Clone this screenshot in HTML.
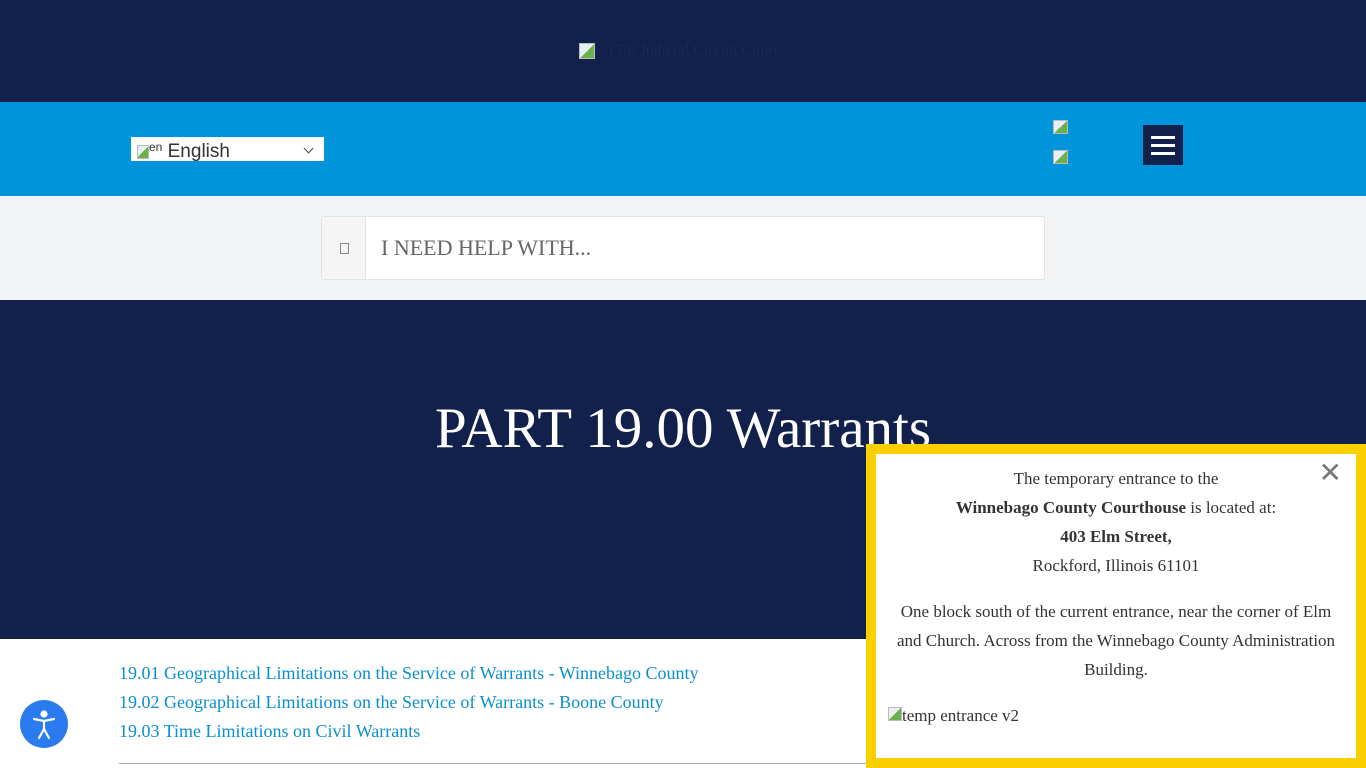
<!DOCTYPE html>
<html><head><meta charset="utf-8"><style>
*{margin:0;padding:0;box-sizing:border-box}
body{width:1366px;height:768px;overflow:hidden;font-family:"Liberation Serif",serif;background:#fff;position:relative}
.top{height:102px;background:#11214b;position:relative}
.logo{position:absolute;left:579px;top:42px;font-size:16px;color:#1b2a50;display:flex;gap:12px;align-items:center}
.bimg{display:inline-block;width:16px;height:16px;background:linear-gradient(135deg,#e8eef4 50%,#6bb04a 50%);border:1px solid #bbb}
.nav{height:94px;background:#0094da;position:relative}
.sel{position:absolute;left:131px;top:137px;width:193px;height:24px;background:#fff;font-family:"Liberation Sans",sans-serif;font-size:19px;color:#333;padding-left:6px;line-height:20px}
.sel .bimg{width:12px;height:14px;vertical-align:-2px}
.sel .ch{position:absolute;right:12px;top:8px;width:7px;height:7px;border-right:1.5px solid #444;border-bottom:1.5px solid #444;transform:rotate(45deg)}
.ic{position:absolute;left:1053px;width:15px;height:14px}
.ham{position:absolute;left:1143px;top:125px;width:40px;height:40px;background:#11214b}
.ham i{position:absolute;left:8px;width:24px;height:3px;background:#fff}
.sbar{height:104px;background:#f2f3f4;position:relative}
.search{position:absolute;left:321px;top:216px;width:724px;height:64px;background:#fff;border:1px solid #e2e2e2;border-radius:3px}
.search .b{position:absolute;left:0;top:0;width:44px;height:62px;background:#f5f5f5;border-right:1px solid #e2e2e2}
.search .b:after{content:"";position:absolute;left:18px;top:26px;width:7px;height:9px;border:1px solid #888}
.search span{position:absolute;left:59px;top:18px;font-size:22px;color:#666}
.hero{height:339px;background:#11214b;color:#fff;text-align:center}
.hero h1{font-weight:normal;font-size:57px;padding-top:96px}
.links{position:absolute;left:119px;top:659px;font-size:18px;line-height:29px}
.links a{color:#0a8fcf;text-decoration:none;display:block}
.hr{position:absolute;left:119px;top:763px;width:760px;height:1px;background:#aaa}
.acc{position:absolute;left:20px;top:700px;width:48px;height:48px;border-radius:50%;background:#2a7bef}
.pop{position:absolute;left:866px;top:444px;width:500px;height:324px;background:#fff;border:10px solid #fcd000;text-align:center;font-size:17px;color:#333;line-height:29px;padding:10px 12px 0}
.pop p{margin-bottom:17px}
.x{position:absolute;right:14px;top:4px;font-family:"Liberation Sans",sans-serif;font-size:28px;color:#777}
</style></head><body>
<div class="top"><div class="logo"><span class="bimg"></span><span>17th Judicial Circuit Court</span></div></div>
<div class="nav"></div>
<div class="sel"><span class="bimg"></span><span style="font-size:12px;vertical-align:6px">en</span> English<span class="ch"></span></div>
<span class="bimg ic" style="top:120px"></span><span class="bimg ic" style="top:150px"></span>
<div class="ham"><i style="top:11px"></i><i style="top:19px"></i><i style="top:27px"></i></div>
<div class="sbar"></div>
<div class="search"><div class="b"></div><span>I NEED HELP WITH...</span></div>
<div class="hero"><h1>PART 19.00 Warrants</h1></div>
<div class="links">
<a>19.01 Geographical Limitations on the Service of Warrants - Winnebago County</a>
<a>19.02 Geographical Limitations on the Service of Warrants - Boone County</a>
<a>19.03 Time Limitations on Civil Warrants</a></div>
<div class="hr"></div>
<div class="acc"><svg width="48" height="48" viewBox="0 0 48 48" fill="none" stroke="#fff" stroke-width="2.2" stroke-linecap="round"><circle cx="24" cy="14" r="2.5" fill="#fff"/><path d="M14 19l10 2 10-2M24 21v8M24 29l-5 9M24 29l5 9"/></svg></div>
<div class="pop"><span class="x">✕</span>
<p>The temporary entrance to the<br><b>Winnebago County Courthouse</b> is located at:<br><b>403 Elm Street,</b><br>Rockford, Illinois 61101</p>
<p>One block south of the current entrance, near the corner of Elm and Church. Across from the Winnebago County Administration Building.</p>
<div style="text-align:left;padding-left:0"><span class="bimg" style="width:14px;height:14px"></span>temp entrance v2</div></div>
</body></html>
